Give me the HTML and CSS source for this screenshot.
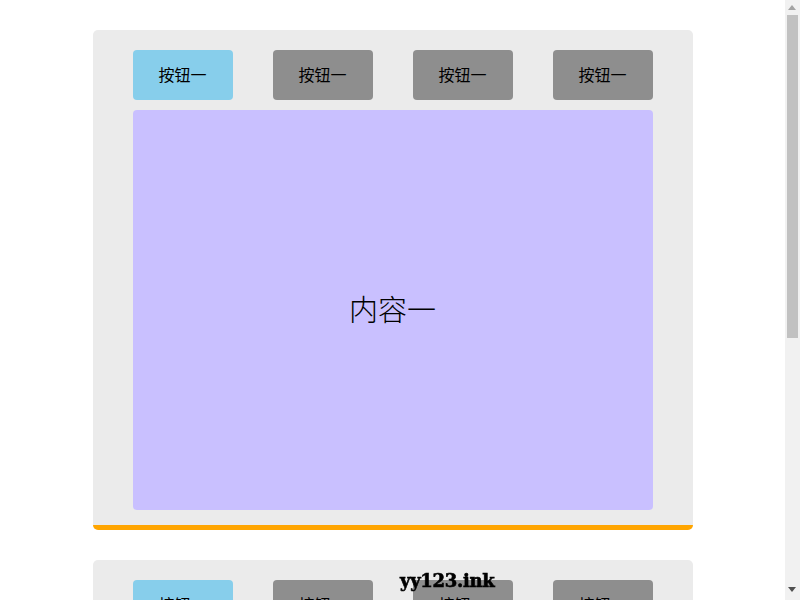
FILE: index.html
```html
<!DOCTYPE html>
<html lang="zh">
<head>
<meta charset="utf-8">
<title>Tabs</title>
<link rel="stylesheet" href="styles.css">
</head>
<body>
<main class="page">
  <div class="tabs">
    <div class="tab-bar">
      <div class="tab active">按钮一</div>
      <div class="tab">按钮一</div>
      <div class="tab">按钮一</div>
      <div class="tab">按钮一</div>
    </div>
    <div class="panel">内容一</div>
  </div>
  <div class="tabs">
    <div class="tab-bar">
      <div class="tab active">按钮一</div>
      <div class="tab">按钮一</div>
      <div class="tab">按钮一</div>
      <div class="tab">按钮一</div>
    </div>
    <div class="panel">内容一</div>
  </div>
</main>
<div class="watermark">yy123.ink</div>
<div class="scrollbar">
  <span class="arrow up"></span>
  <span class="thumb"></span>
  <span class="arrow down"></span>
</div>
</body>
</html>
```
FILE: styles.css
```css
html, body {
  margin: 0;
  padding: 0;
  background: #ffffff;
}
body {
  font-family: "Liberation Serif", "Noto Sans CJK SC", serif;
  color: #000;
}
.page {
  width: 785px;
  padding: 1px 0;
}
.tabs {
  width: 600px;
  margin: 29px auto 30px;
  box-sizing: border-box;
  padding: 20px 40px 15px;
  background: #ebebeb;
  border-radius: 5px;
  border-bottom: 5px solid #ffa500;
  display: flex;
  flex-direction: column;
  gap: 10px;
}
.tabs + .tabs {
  margin-top: 30px;
}
.tab-bar {
  display: flex;
  justify-content: space-between;
}
.tab {
  width: 100px;
  height: 50px;
  box-sizing: border-box;
  padding-bottom: 2px;
  border-radius: 4px;
  background: #8e8e8e;
  display: flex;
  align-items: center;
  justify-content: center;
  font-size: 16px;
  font-family: "Noto Sans CJK SC", sans-serif;
}
.tab.active {
  background: #87ceeb;
}
.panel {
  height: 400px;
  box-sizing: border-box;
  padding-bottom: 5px;
  border-radius: 4px;
  background: #c9c0ff;
  display: flex;
  align-items: center;
  justify-content: center;
  font-size: 29px;
  font-family: "Noto Sans CJK SC", sans-serif;
  font-weight: 300;
}
.watermark {
  position: fixed;
  left: 400px;
  bottom: 9px;
  font-family: "DejaVu Serif", serif;
  font-weight: 900;
  font-size: 18px;
  color: #000;
  letter-spacing: -0.3px;
  -webkit-text-stroke: 0.6px #000;
}
.scrollbar {
  position: fixed;
  top: 0;
  right: 0;
  width: 15px;
  height: 600px;
  background: #f1f1f1;
}
.thumb {
  position: absolute;
  left: 2px;
  top: 15px;
  width: 11px;
  height: 323px;
  background: #c1c1c1;
}
.arrow {
  position: absolute;
  left: 3px;
  width: 0;
  height: 0;
  border-left: 4.5px solid transparent;
  border-right: 4.5px solid transparent;
}
.arrow.up {
  top: 5px;
  border-bottom: 5px solid #a3a3a3;
}
.arrow.down {
  bottom: 8px;
  border-top: 5px solid #505050;
}
```
